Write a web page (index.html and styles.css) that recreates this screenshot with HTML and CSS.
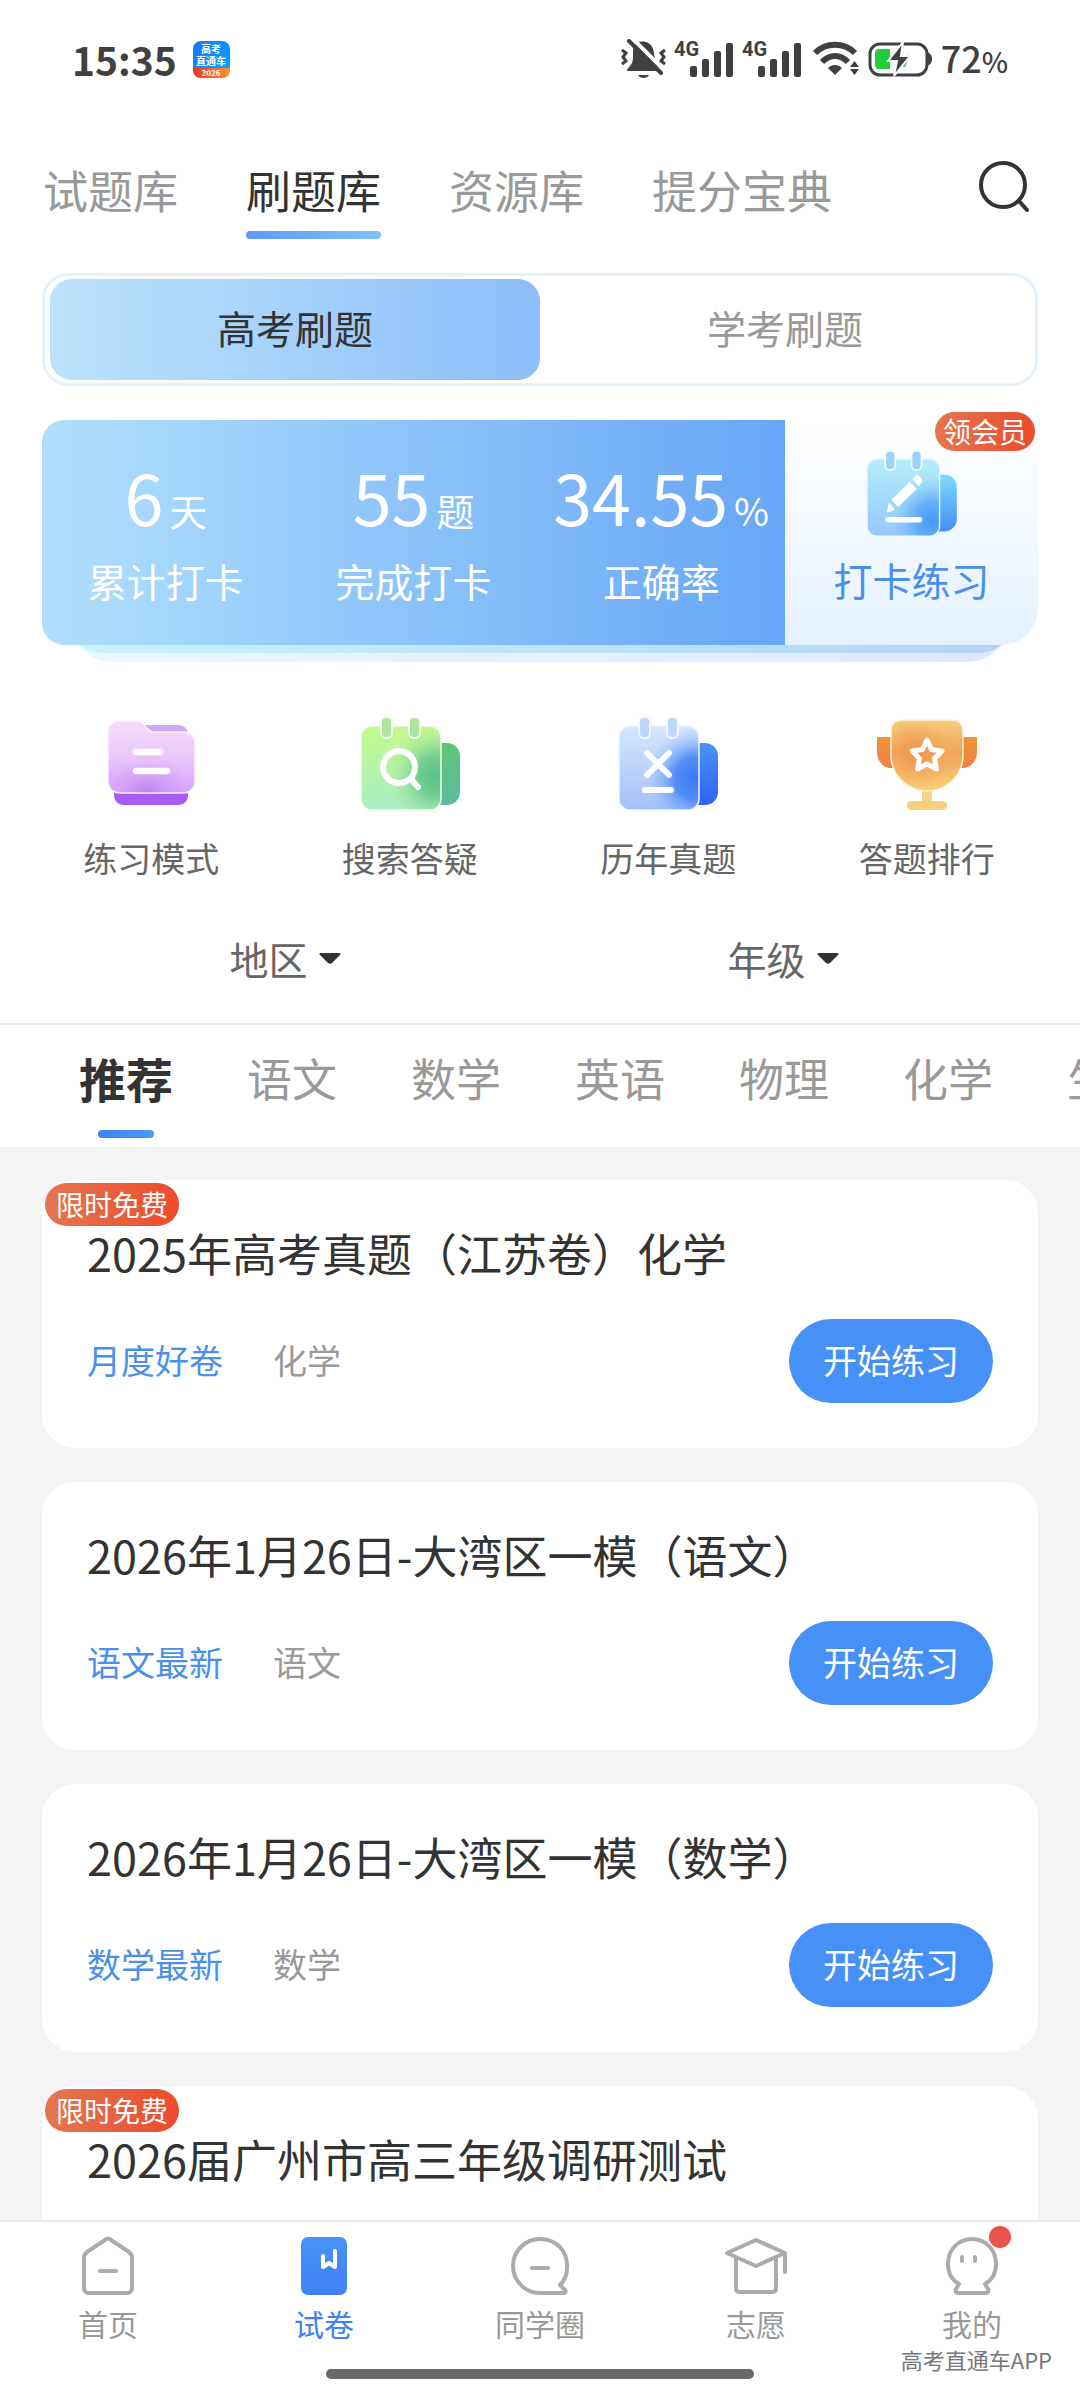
FILE: index.html
```
<!DOCTYPE html>
<html lang="zh-CN">
<head>
  <meta charset="UTF-8">
  <meta name="viewport" content="width=device-width, initial-scale=1.0">
  <title>刷题库 - 高考直通车</title>
  <link rel="stylesheet" href="styles.css">
</head>
<body>

  <!-- Shared gradients -->
  <svg class="defs" width="0" height="0" aria-hidden="true">
    <defs>
      <linearGradient id="skyFront" x1="0" y1="0" x2="0" y2="1"><stop offset="0" stop-color="#b5edfb"/><stop offset="1" stop-color="#97c6fa"/></linearGradient>
      <linearGradient id="skyBack" x1="0" y1="0" x2="0" y2="1"><stop offset="0" stop-color="#7ddcfb"/><stop offset="1" stop-color="#468df7"/></linearGradient>
      <radialGradient id="skyGlow" cx="0.9" cy="0.8" r="0.6"><stop offset="0" stop-color="#4598f7"/><stop offset="0.4" stop-color="#58a9f8" stop-opacity="0.85"/><stop offset="1" stop-color="#8fd5fa" stop-opacity="0"/></radialGradient>
      <linearGradient id="greenFront" x1="0" y1="0" x2="0" y2="1"><stop offset="0" stop-color="#c3f98a"/><stop offset="1" stop-color="#a9edc4"/></linearGradient>
      <linearGradient id="greenBack" x1="0" y1="0" x2="0" y2="1"><stop offset="0" stop-color="#60c673"/><stop offset="1" stop-color="#5dbb9e"/></linearGradient>
      <radialGradient id="greenGlow" cx="0.95" cy="0.6" r="0.6"><stop offset="0" stop-color="#58c086"/><stop offset="0.4" stop-color="#66c88c" stop-opacity="0.85"/><stop offset="1" stop-color="#9fe59a" stop-opacity="0"/></radialGradient>
      <linearGradient id="blueFront" x1="0" y1="0" x2="0" y2="1"><stop offset="0" stop-color="#d3e7fe"/><stop offset="1" stop-color="#a5bff9"/></linearGradient>
      <linearGradient id="blueBack" x1="0" y1="0" x2="0" y2="1"><stop offset="0" stop-color="#4693f6"/><stop offset="1" stop-color="#2f62f5"/></linearGradient>
      <radialGradient id="blueGlow" cx="0.95" cy="0.62" r="0.62"><stop offset="0" stop-color="#3a78f7"/><stop offset="0.4" stop-color="#4785f7" stop-opacity="0.9"/><stop offset="1" stop-color="#9cc5fb" stop-opacity="0"/></radialGradient>
      <linearGradient id="purpleFront" x1="0" y1="0" x2="0" y2="1"><stop offset="0" stop-color="#f3dcf9"/><stop offset="0.5" stop-color="#eac8fa"/><stop offset="1" stop-color="#d6a3f8"/></linearGradient>
      <radialGradient id="purpleGlow" cx="0.45" cy="1" r="0.55"><stop offset="0" stop-color="#c07ff5"/><stop offset="1" stop-color="#d9aaf8" stop-opacity="0"/></radialGradient>
      <linearGradient id="cupFront" x1="0" y1="0" x2="0" y2="1"><stop offset="0" stop-color="#f7cd7f"/><stop offset="0.45" stop-color="#f2a55a"/><stop offset="0.65" stop-color="#f4b264"/><stop offset="1" stop-color="#f9cf7c"/></linearGradient>
      <radialGradient id="cupGlow" cx="0.35" cy="0.47" r="0.5"><stop offset="0" stop-color="#f0914a"/><stop offset="1" stop-color="#f2a55a" stop-opacity="0"/></radialGradient>
      <linearGradient id="cupHandle" x1="0" y1="0" x2="0" y2="1"><stop offset="0" stop-color="#f09334"/><stop offset="1" stop-color="#ee7f4b"/></linearGradient>
      <linearGradient id="bookFill" x1="0" y1="0" x2="0" y2="1"><stop offset="0" stop-color="#4793f8"/><stop offset="1" stop-color="#4080f6"/></linearGradient>
      <linearGradient id="appTop" x1="0" y1="0" x2="1" y2="1"><stop offset="0" stop-color="#1579f8"/><stop offset="1" stop-color="#06a5fd"/></linearGradient>
      <linearGradient id="appBottom" x1="0" y1="0" x2="1" y2="0"><stop offset="0" stop-color="#f4341d"/><stop offset="1" stop-color="#fb952c"/></linearGradient>
    </defs>
  </svg>

  <header class="status-bar">
    <div class="status-left">
      <span class="clock">15:35</span>
      <svg width="37" height="37" viewBox="0 0 37 37" aria-hidden="true">
        <clipPath id="appClip"><rect width="37" height="37" rx="8"/></clipPath>
        <g clip-path="url(#appClip)">
          <rect width="37" height="37" fill="url(#appTop)"/>
          <rect y="27" width="37" height="10" fill="url(#appBottom)"/>
        </g>
        <g class="app-icon-text">
          <text x="18" y="12" font-size="10">高考</text>
          <text x="18" y="24" font-size="10">直通车</text>
          <text x="18" y="35" font-size="8">2026</text>
        </g>
      </svg>
    </div>
    <div class="status-right">
      <!-- Muted bell -->
      <svg width="45" height="40" viewBox="0 0 45 40" aria-hidden="true">
        <path d="M13 6C18 0 30 2 32 10c2 6 1 12 5 18l2 4H6c0-3 3-4 5-8 2-5 0-13 2-18z" fill="#404040"/>
        <path d="M17 36h11c-2 4-9 4-11 0z" fill="#404040"/>
        <path d="M12 0L45 33" stroke="#fff" stroke-width="4"/>
        <path d="M8 2L40 34" stroke="#404040" stroke-width="4" stroke-linecap="round"/>
        <path d="M1 11l4 3-3 4 3 4-4 3M44 11l-4 3 3 4-3 4 4 3" fill="none" stroke="#404040" stroke-width="3"/>
      </svg>
      <svg class="signal" width="60" height="40" viewBox="0 0 60 40" aria-hidden="true">
        <text x="0" y="17">4G</text>
        <g fill="#404040"><rect x="16" y="27" width="7" height="11" rx="2"/><rect x="28" y="20" width="7" height="18" rx="2"/><rect x="40" y="12" width="7" height="26" rx="2"/><rect x="52" y="4" width="7" height="34" rx="2"/></g>
      </svg>
      <svg class="signal" width="60" height="40" viewBox="0 0 60 40" aria-hidden="true">
        <text x="0" y="17">4G</text>
        <g fill="#404040"><rect x="16" y="27" width="7" height="11" rx="2"/><rect x="28" y="20" width="7" height="18" rx="2"/><rect x="40" y="12" width="7" height="26" rx="2"/><rect x="52" y="4" width="7" height="34" rx="2"/></g>
      </svg>
      <svg class="wifi" width="47" height="36" viewBox="0 0 47 36" aria-hidden="true">
        <path d="M2 12C13 1 31 1 42 12M9 21c8-8 18-8 26 0" fill="none" stroke="#404040" stroke-width="6"/>
        <path d="M15 27c4-4 10-4 14 0l-7 7z" fill="#404040"/>
        <path d="M37 26l4.500-6 4.500 6zM37 28l4.500 6 4.500-6z" fill="#404040"/>
      </svg>
      <svg class="battery" width="65" height="36" viewBox="0 0 65 36" aria-hidden="true">
        <rect x="2" y="3" width="57" height="31" rx="10" fill="none" stroke="#404040" stroke-width="3"/>
        <path d="M59 12h2c4 2 4 10 0 12h-2z" fill="#404040"/>
        <path d="M11 8h11v20H11c-3 0-4-2-4-5V13c0-3 1-5 4-5zM39 13l2 3-4 10h-2z" fill="#20cd3c"/>
        <path d="M35 1L20 20h9l-3 15 16-20h-9l2-14z" fill="#404040" stroke="#fff" stroke-width="2"/>
      </svg>
      <span class="battery-level">72<small>%</small></span>
    </div>
  </header>

  <nav class="top-tabs">
    <a href="#" class="top-tab">试题库</a>
    <a href="#" class="top-tab active">刷题库</a>
    <a href="#" class="top-tab">资源库</a>
    <a href="#" class="top-tab">提分宝典</a>
    <button class="search-button" aria-label="搜索">
      <svg width="52" height="54" viewBox="0 0 52 54" aria-hidden="true">
        <circle cx="25" cy="25" r="22" fill="none" stroke="#333" stroke-width="4"/>
        <path d="M41 41l8 9" stroke="#333" stroke-width="4" stroke-linecap="round"/>
      </svg>
    </button>
  </nav>

  <div class="segment">
    <button class="segment-item active">高考刷题</button>
    <button class="segment-item">学考刷题</button>
  </div>

  <section class="stats">
    <div class="stats-data">
      <div class="stat">
        <div class="stat-value">6<span>天</span></div>
        <p>累计打卡</p>
      </div>
      <div class="stat">
        <div class="stat-value">55<span>题</span></div>
        <p>完成打卡</p>
      </div>
      <div class="stat">
        <div class="stat-value">34.55<span>%</span></div>
        <p>正确率</p>
      </div>
    </div>
    <a href="#" class="checkin">
      <svg width="91" height="87" viewBox="0 0 100 96" aria-hidden="true">
        <rect x="60" y="27" width="40" height="63" rx="14" fill="url(#skyBack)"/>
        <rect x="1" y="10" width="80" height="85" rx="11" fill="url(#skyFront)"/>
        <rect x="1" y="10" width="80" height="85" rx="11" fill="url(#skyGlow)" stroke="#e3f7ff" stroke-width="1.500"/>
        <g fill="#9fd0f8" stroke="#eefaff" stroke-width="2"><rect x="21" y="1" width="11" height="21" rx="5"/><rect x="50" y="1" width="11" height="21" rx="5"/></g>
        <path d="M23 69l2-11 7 8zM28 55l20-20 8 8-21 20zM51 32l4-4c2-1 8 4 7 7l-4 5z" fill="#fff"/>
        <path d="M24 77h35" stroke="#fff" stroke-width="6" stroke-linecap="round"/>
      </svg>
      <span>打卡练习</span>
      <b class="member-badge">领会员</b>
    </a>
  </section>

  <nav class="shortcuts">
    <a href="#">
      <svg width="100" height="96" viewBox="0 0 100 96" aria-hidden="true">
        <path d="M42 9h35c6 0 10 4 10 9H46z" fill="#cda8f7"/>
        <path d="M13 76h74v3c0 6-4 10-10 10H23c-6 0-10-4-10-10z" fill="#a75df5"/>
        <path d="M19 5h16c10 0 9 11 18 11h29c7 0 12 5 12 12v37c0 7-5 12-12 12H19C12 77 7 72 7 65V17C7 10 12 5 19 5z" fill="url(#purpleFront)"/>
        <path d="M19 5h16c10 0 9 11 18 11h29c7 0 12 5 12 12v37c0 7-5 12-12 12H19C12 77 7 72 7 65V17C7 10 12 5 19 5z" fill="url(#purpleGlow)" stroke="#fbf0fe" stroke-width="1.500"/>
        <path d="M35 36h24M35 55h31" stroke="#fff" stroke-width="6.500" stroke-linecap="round"/>
      </svg>
      <span>练习模式</span>
    </a>
    <a href="#">
      <svg width="100" height="96" viewBox="0 0 100 96" aria-hidden="true">
        <rect x="60" y="27" width="40" height="62" rx="13" fill="url(#greenBack)"/>
        <rect x="1" y="10" width="80" height="84" rx="11" fill="url(#greenFront)"/>
        <rect x="1" y="10" width="80" height="84" rx="11" fill="url(#greenGlow)" stroke="#f0feec" stroke-width="1.500"/>
        <g fill="#aee6a0" stroke="#f4fff0" stroke-width="2"><rect x="21" y="1" width="11" height="21" rx="5"/><rect x="49" y="1" width="11" height="21" rx="5"/></g>
        <circle cx="39" cy="51" r="16" fill="none" stroke="#fff" stroke-width="6"/>
        <path d="M51 63l7 8" stroke="#fff" stroke-width="6" stroke-linecap="round"/>
      </svg>
      <span>搜索答疑</span>
    </a>
    <a href="#">
      <svg width="100" height="96" viewBox="0 0 100 96" aria-hidden="true">
        <rect x="60" y="27" width="40" height="62" rx="13" fill="url(#blueBack)"/>
        <rect x="1" y="10" width="80" height="84" rx="11" fill="url(#blueFront)"/>
        <rect x="1" y="10" width="80" height="84" rx="11" fill="url(#blueGlow)" stroke="#eef5ff" stroke-width="1.500"/>
        <g fill="#bdd6fb" stroke="#f3f8ff" stroke-width="2"><rect x="21" y="1" width="11" height="21" rx="5"/><rect x="49" y="1" width="11" height="21" rx="5"/></g>
        <path d="M29 37l22 22M51 37L29 59M27 74h26" stroke="#fff" stroke-width="6" stroke-linecap="round"/>
      </svg>
      <span>历年真题</span>
    </a>
    <a href="#">
      <svg width="100" height="96" viewBox="0 0 100 96" aria-hidden="true">
        <path d="M0 21h20v31h-6C6 52 0 45 0 36zM100 21H80v31h6c8 0 14-7 14-16z" fill="url(#cupHandle)"/>
        <path d="M45 70h10v20H45z" fill="#f9d383"/>
        <rect x="30" y="85" width="40" height="9" rx="4.500" fill="#f9cf78"/>
        <path d="M25 4h50c6 0 11 4 11 10v26c0 20-18 35-36 35S14 60 14 40V14C14 8 19 4 25 4z" fill="url(#cupFront)"/>
        <path d="M25 4h50c6 0 11 4 11 10v26c0 20-18 35-36 35S14 60 14 40V14C14 8 19 4 25 4z" fill="url(#cupGlow)" stroke="#fff2d8" stroke-width="1.500"/>
        <path d="M50 24l4.500 9.500 10.500 1.500-7.500 7.500 2 10.500L50 48l-9.500 5 2-10.500L35 35l10.500-1.500z" fill="none" stroke="#fff" stroke-width="5" stroke-linejoin="round"/>
      </svg>
      <span>答题排行</span>
    </a>
  </nav>

  <div class="filters">
    <div class="filter">
      <select aria-label="地区"><option>地区</option></select>
      <svg width="22" height="11" viewBox="0 0 22 11" aria-hidden="true"><path d="M2 0h18c2 0 2 1 1 2l-8 8c-1 1-3 1-4 0L1 2C0 1 0 0 2 0z" fill="#333"/></svg>
    </div>
    <div class="filter">
      <select aria-label="年级"><option>年级</option></select>
      <svg width="22" height="11" viewBox="0 0 22 11" aria-hidden="true"><path d="M2 0h18c2 0 2 1 1 2l-8 8c-1 1-3 1-4 0L1 2C0 1 0 0 2 0z" fill="#333"/></svg>
    </div>
  </div>

  <nav class="subjects">
    <a href="#" class="subject active">推荐</a>
    <a href="#" class="subject">语文</a>
    <a href="#" class="subject">数学</a>
    <a href="#" class="subject">英语</a>
    <a href="#" class="subject">物理</a>
    <a href="#" class="subject">化学</a>
    <a href="#" class="subject">生物</a>
  </nav>

  <main class="papers">
    <article class="paper">
      <b class="free-badge">限时免费</b>
      <h2>2025年高考真题（江苏卷）化学</h2>
      <div class="paper-row">
        <span class="tag">月度好卷</span>
        <span>化学</span>
        <button class="start-button">开始练习</button>
      </div>
    </article>
    <article class="paper">
      <h2>2026年1月26日-大湾区一模（语文）</h2>
      <div class="paper-row">
        <span class="tag">语文最新</span>
        <span>语文</span>
        <button class="start-button">开始练习</button>
      </div>
    </article>
    <article class="paper">
      <h2>2026年1月26日-大湾区一模（数学）</h2>
      <div class="paper-row">
        <span class="tag">数学最新</span>
        <span>数学</span>
        <button class="start-button">开始练习</button>
      </div>
    </article>
    <article class="paper">
      <b class="free-badge">限时免费</b>
      <h2>2026届广州市高三年级调研测试</h2>
    </article>
  </main>

  <footer class="bottom-bar">
    <nav class="bottom-nav">
      <a href="#">
        <svg width="64" height="60" viewBox="0 0 64 60" aria-hidden="true">
          <path d="M29 4L11 16c-2 2-3 3-3 5v31c0 3 2 5 5 5h38c3 0 5-2 5-5V21c0-2-1-3-3-5L35 4c-2-2-4-2-6 0zM24 35h16"/>
        </svg>
        首页
      </a>
      <a href="#" class="active">
        <svg width="64" height="60" viewBox="0 0 64 60" aria-hidden="true">
          <rect x="9" y="1" width="46" height="58" rx="7" fill="url(#bookFill)"/>
          <path class="bookmark" d="M31 20v11l6-4 6 4V15"/>
        </svg>
        试卷
      </a>
      <a href="#">
        <svg width="64" height="60" viewBox="0 0 64 60" aria-hidden="true">
          <path d="M32 3a27 27 0 1 0 0 54h24c2 0 2-2 1-3l-5-5C62 39 61 21 52 11 47 6 40 3 32 3zM24 32h16"/>
        </svg>
        同学圈
      </a>
      <a href="#">
        <svg width="64" height="60" viewBox="0 0 64 60" aria-hidden="true">
          <path d="M32 4L3 17l29 13 29-13zM12 23v29c0 3 2 4 4 4h32c3 0 4-2 4-4V23M61 18v18"/>
        </svg>
        志愿
      </a>
      <a href="#">
        <svg width="64" height="60" viewBox="0 0 64 60" aria-hidden="true">
          <path d="M32 3C18 3 8 14 8 28c0 9 4 16 11 20l-3 5c-1 2 0 4 2 4h28c2 0 3-2 2-4l-3-5c7-4 11-11 11-20C56 14 46 3 32 3zM22 21v4M35 21v4"/>
        </svg>
        我的
        <i class="dot"></i>
      </a>
    </nav>
    <div class="home-indicator"></div>
    <small class="watermark">高考直通车APP</small>
  </footer>

</body>
</html>
```
FILE: styles.css
```
/* Basic reset */
* {
  box-sizing: border-box;
  margin: 0;
  padding: 0;
}

body {
  font-family: "Noto Sans CJK SC", sans-serif;
  font-size: 34px;
  background-color: #fff;
  color: #333;
  height: 100vh;
  display: flex;
  flex-direction: column;
  overflow: hidden;
}

a {
  color: inherit;
  text-decoration: none;
}

button,
select {
  font: inherit;
  color: inherit;
  background: none;
  border: none;
  cursor: pointer;
}

svg {
  display: block;
  flex-shrink: 0;
}

.defs {
  position: absolute;
}

/* Status bar */
.status-bar {
  display: flex;
  justify-content: space-between;
  align-items: center;
  height: 118px;
  padding: 0 72px;
  color: #404040;
}

.status-left,
.status-right {
  display: flex;
  align-items: center;
}

.status-left {
  gap: 16px;
}

.status-right {
  gap: 8px;
}

.clock {
  font-size: 39px;
  font-weight: 700;
  line-height: 60px;
}

.app-icon-text {
  fill: #fff;
  font-weight: 700;
  text-anchor: middle;
}

.signal text {
  font-family: Roboto, sans-serif;
  font-size: 20px;
  font-weight: 700;
  fill: #404040;
}

.signal {
  overflow: visible;
}

.wifi {
  margin-left: 3px;
}

.battery-level {
  font-size: 36px;
  font-weight: 500;
  line-height: 60px;
}

.battery-level small {
  font-size: 28px;
}

/* Top tabs */
.top-tabs {
  display: flex;
  gap: 68px;
  padding: 42px 50px 34px 43px;
}

.top-tab {
  font-size: 45px;
  line-height: 60px;
  color: #999;
}

.top-tab::after {
  content: "";
  display: block;
  height: 8px;
  margin-top: 11px;
  border-radius: 4px;
}

.top-tab.active {
  color: #333;
}

.top-tab.active::after {
  background: linear-gradient(to right, #5e97f6, #80c3fa);
}

.search-button {
  margin-left: auto;
  align-self: flex-start;
}

/* Segment switch */
.segment {
  display: flex;
  margin: 0 42px 34px;
  padding: 3px 5px;
  border: 3px solid #e3f2fd;
  border-radius: 26px;
}

.segment-item {
  flex: 1;
  height: 101px;
  padding-bottom: 5px;
  border-radius: 22px;
  font-size: 39px;
  color: #999;
}

.segment-item.active {
  color: #333;
  background: linear-gradient(to right, #bce2fb, #8dbef9);
}

/* Check-in stats */
.stats {
  position: relative;
  display: flex;
  margin: 0 42px 17px;
}

/* Two sheets that peek out under the card */
.stats::before,
.stats::after {
  content: "";
  position: absolute;
  z-index: -1;
  height: 80px;
  border-radius: 40px;
}

.stats::before {
  left: 20px;
  right: 20px;
  bottom: -8px;
  background: linear-gradient(to right, #c9f5fb, #b2d3f8);
}

.stats::after {
  left: 30px;
  right: 30px;
  bottom: -17px;
  z-index: -2;
  background: linear-gradient(to right, #e8f9fe, #dce9fc);
}

.stats-data {
  flex: 743;
  display: flex;
  padding: 40px 0;
  border-radius: 22px 0 0 22px;
  background: linear-gradient(to right, #b1dffc, #81baf9 65%, #67a6f7);
  color: #fff;
}

.stat {
  flex: 1 1 0;
  text-align: center;
  font-size: 39px;
  line-height: 50px;
}

.stat-value {
  display: flex;
  justify-content: center;
  align-items: baseline;
  gap: 6px;
  height: 72px;
  margin-bottom: 23px;
  font-size: 70px;
  line-height: 72px;
}

.stat-value span {
  font-size: 38px;
  line-height: 38px;
}

.checkin {
  flex: 253;
  position: relative;
  display: flex;
  flex-direction: column;
  align-items: center;
  gap: 17px;
  padding-top: 30px;
  border-radius: 0 0 36px 0;
  background: linear-gradient(to bottom, #fff, #e4f1fe);
  font-size: 39px;
  line-height: 50px;
  color: #4a90ea;
}

.member-badge,
.free-badge {
  position: absolute;
  background: linear-gradient(to right, #e37750, #ec4b2c);
  border-radius: 22px;
  color: #fff;
  font-size: 28px;
  font-weight: 400;
  text-align: center;
}

.member-badge {
  top: -8px;
  right: 3px;
  padding: 0 8px;
  line-height: 39px;
}

/* Shortcuts */
.shortcuts {
  display: flex;
  padding: 54px 24px 47px 22px;
}

.shortcuts a {
  flex: 1;
  display: flex;
  flex-direction: column;
  align-items: center;
  gap: 23px;
  line-height: 46px;
  color: #666;
}

/* Filters */
.filters {
  display: flex;
  padding: 0 42px 35px;
  border-bottom: 2px solid #ebebeb;
}

.filter {
  flex: 1;
  display: flex;
  justify-content: center;
  align-items: center;
  gap: 10px;
  padding-right: 12px;
  font-size: 39px;
  color: #666;
}

.filter select {
  height: 60px;
  appearance: none;
}

/* Subject tabs */
.subjects {
  display: flex;
  padding: 23px 0 9px 42px;
  overflow: hidden;
}

.subject {
  flex-shrink: 0;
  padding: 0 37px;
  font-size: 45px;
  line-height: 60px;
  color: #999;
}

.subject.active {
  font-size: 47px;
  font-weight: 700;
  color: #333;
}

.subject::after {
  content: "";
  display: block;
  width: 56px;
  height: 8px;
  margin: 22px auto 0;
  border-radius: 4px;
}

.subject.active::after {
  background: linear-gradient(to right, #3f80f7, #4a9df8);
}

/* Paper list */
.papers {
  flex: 1;
  min-height: 0;
  overflow: hidden;
  display: flex;
  flex-direction: column;
  gap: 34px;
  padding: 33px 42px 0;
  background-color: #f4f4f4;
}

.paper {
  position: relative;
  flex-shrink: 0;
  min-height: 268px;
  padding: 43px 45px 45px;
  border-radius: 33px;
  background-color: #fff;
}

.paper h2 {
  font-size: 45px;
  font-weight: 400;
  line-height: 60px;
}

.free-badge {
  top: 3px;
  left: 3px;
  padding: 0 11px;
  line-height: 43px;
}

.paper-row {
  display: flex;
  align-items: center;
  gap: 50px;
  margin-top: 36px;
  color: #999;
}

.paper-row span {
  padding-bottom: 4px;
}

.paper-row .tag {
  color: #4a90ea;
}

.start-button {
  height: 84px;
  margin-left: auto;
  padding: 0 34px 4px;
  border-radius: 42px;
  background-color: #4690f7;
  color: #fff;
}

.start-button:active {
  background-color: #3a7fe0;
}

/* Bottom bar */
.bottom-bar {
  position: relative;
  z-index: 1;
  padding-bottom: 21px;
  border-top: 2px solid #ebebeb;
  background-color: #fff;
}

.bottom-nav {
  display: flex;
  padding: 14px 0 24px;
}

.bottom-nav a {
  flex: 1;
  position: relative;
  display: flex;
  flex-direction: column;
  align-items: center;
  gap: 5px;
  font-size: 30px;
  line-height: 44px;
  color: #999;
}

.bottom-nav a.active {
  color: #4080f6;
}

.bottom-nav path {
  fill: none;
  stroke: #a9abac;
  stroke-width: 4;
  stroke-linecap: round;
  stroke-linejoin: round;
}

.bottom-nav .bookmark {
  stroke: #fff;
}

.dot {
  position: absolute;
  top: -10px;
  left: calc(50% + 17px);
  width: 22px;
  height: 22px;
  border-radius: 50%;
  background-color: #e8544c;
}

.home-indicator {
  width: 428px;
  height: 10px;
  margin: 0 auto;
  border-radius: 5px;
  background-color: #6a6a6a;
}

.watermark {
  position: absolute;
  right: 28px;
  bottom: 24px;
  font-size: 22px;
  line-height: 34px;
  color: #777;
}
```
